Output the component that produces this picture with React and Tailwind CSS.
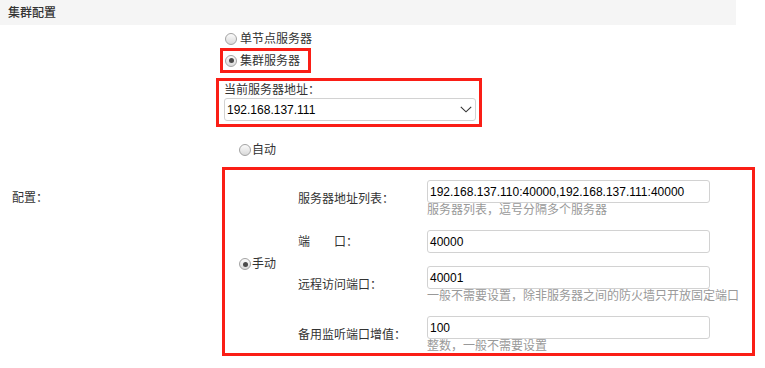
import React from "react";

function Radio({ checked }) {
  return (
    <span className="flex h-[12px] w-[12px] shrink-0 items-center justify-center rounded-full border border-[#a3a3a3] bg-gradient-to-b from-[#fbfbfb] to-[#d9d9d9]">
      {checked && <span className="h-[5px] w-[5px] rounded-full bg-[#4a4a4a]" />}
    </span>
  );
}

function Field({ label, value, hint }) {
  return (
    <div className="flex items-center">
      <div className="w-[129px] shrink-0 text-[#333]">{label}</div>
      <div>
        <div className="flex h-[23px] w-[283px] items-center rounded-[3px] border border-[#d2d2d2] px-[2px] text-black">
          {value}
        </div>
        {hint && <div className="h-[14px] whitespace-nowrap leading-[14px] text-[#999]">{hint}</div>}
      </div>
    </div>
  );
}

export default function App() {
  return (
    <div className="h-[368px] w-[765px] bg-white font-['Liberation_Sans','Noto_Sans_CJK_SC',sans-serif] text-[12px] leading-[14px] text-[#333]">
      <div className="flex h-[25px] w-[736px] items-center bg-[#f5f5f5] pl-[8px] text-[12px] font-medium text-[#333]">
        集群配置
      </div>

      <div className="flex">
        <div className="w-[216px] shrink-0 pl-[12px] pt-[166px]">配置：</div>

        <div className="flex-1">
          <div className="ml-[9px] mt-[7px] flex h-[13px] items-center gap-[3px]">
            <Radio />
            <span>单节点服务器</span>
          </div>

          <div className="ml-[4px] mt-[3px] flex h-[25px] w-[91px] items-center gap-[3px] border-[3px] border-[#fa1e16] pl-[2px]">
            <Radio checked />
            <span>集群服务器</span>
          </div>

          <div className="mt-[5px] h-[49px] w-[266px] border-[3px] border-[#fa1e16] pl-[5px] pt-[2px]">
            <div className="h-[14px]">当前服务器地址：</div>
            <div className="mt-[1px] flex h-[23px] w-[252px] items-center justify-between rounded-[3px] border border-[#d2d2d2] pl-[2px] pr-[3px] text-black">
              <span>192.168.137.111</span>
              <svg width="12" height="7" viewBox="0 0 12 7" fill="none">
                <path d="M0.8 0.8 L6 5.8 L11.2 0.8" stroke="#333" strokeWidth="1.1" />
              </svg>
            </div>
          </div>

          <div className="ml-[23px] mt-[16px] flex h-[14px] items-center gap-[1px]">
            <Radio />
            <span>自动</span>
          </div>

          <div className="ml-[6px] mt-[10px] flex h-[189px] w-[533px] border-[3px] border-[#fa1e16]">
            <div className="flex w-[73px] shrink-0 items-center gap-[1px] self-center pl-[14px] pt-[5px]">
              <Radio checked />
              <span>手动</span>
            </div>
            <div className="flex flex-col gap-[13px] pt-[10px]">
              <Field
                label="服务器地址列表："
                value="192.168.137.110:40000,192.168.137.111:40000"
                hint="服务器列表，逗号分隔多个服务器"
              />
              <Field
                label={
                  <span>
                    端<span className="ml-[24px]">口：</span>
                  </span>
                }
                value="40000"
              />
              <Field
                label="远程访问端口："
                value="40001"
                hint="一般不需要设置，除非服务器之间的防火墙只开放固定端口"
              />
              <Field label="备用监听端口增值：" value="100" hint="整数，一般不需要设置" />
            </div>
          </div>
        </div>
      </div>
    </div>
  );
}
